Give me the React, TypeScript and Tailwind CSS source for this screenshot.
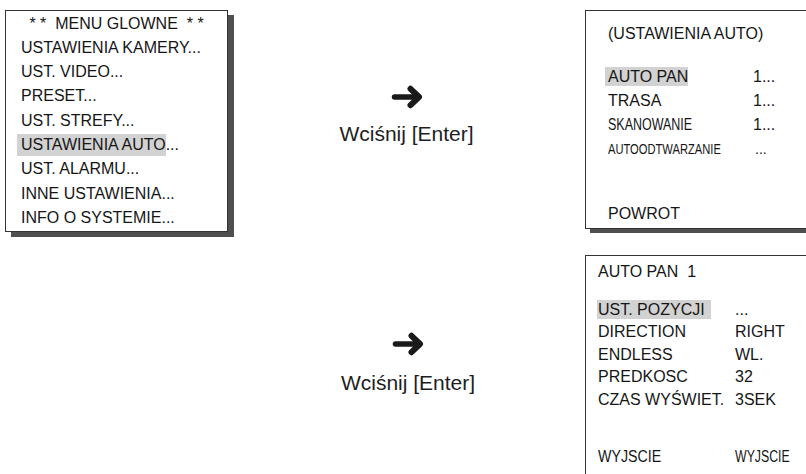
import React from "react";

const Arrow = () => (
  <svg width="32" height="24" viewBox="0 0 32 24" className="block">
    <path d="M3.5 12 H26" stroke="#1a1a1a" strokeWidth="5.5" strokeLinecap="round" fill="none" />
    <path
      d="M19.5 3.8 L28 12 L19.5 20.2"
      stroke="#1a1a1a"
      strokeWidth="6"
      strokeLinecap="round"
      strokeLinejoin="round"
      fill="none"
    />
  </svg>
);

const Press = () => (
  <div className="text-[21px] leading-[24px] text-[#1e1e1e] whitespace-nowrap">Wciśnij [Enter]</div>
);

export default function App() {
  return (
    <div className="w-[806px] h-[474px] overflow-hidden bg-white text-[#161616] font-['Liberation_Sans',Arial,sans-serif]">
      {/* Row 1 */}
      <div className="flex h-[255px] pt-[10px]">
        <div className="w-[228px] shrink-0 pl-[5px]">
          <div className="w-[223px] h-[222px] border border-[#333] bg-white shadow-[6px_5px_0_#4f4f4f] text-[16px] leading-[24.3px] pt-[0.5px] pl-[15px] whitespace-pre">
            <div className="text-center -ml-[15px]">{"* *  MENU GLOWNE  * *"}</div>
            <div>USTAWIENIA KAMERY...</div>
            <div>UST. VIDEO...</div>
            <div>PRESET...</div>
            <div>UST. STREFY...</div>
            <div>
              <span className="inline-block leading-[22px] bg-[#d2d2d2] -ml-[4px] pl-[4px]">USTAWIENIA AUTO</span>...
            </div>
            <div>UST. ALARMU...</div>
            <div>INNE USTAWIENIA...</div>
            <div>INFO O SYSTEMIE...</div>
          </div>
        </div>

        <div className="flex-1 flex flex-col items-center pt-[75px]">
          <Arrow />
          <div className="mt-[13px]">
            <Press />
          </div>
        </div>

        <div className="w-[221px] shrink-0">
          <div className="w-[240px] h-[219px] border border-[#333] bg-white shadow-[5px_4px_0_#4f4f4f] flex flex-col text-[16px] pl-[22px] pt-[11px] pb-[2px]">
            <div className="leading-[24px]">(USTAWIENIA AUTO)</div>
            <div className="mt-[18.7px] grid grid-cols-[145px_1fr] leading-[24px]">
              <div>
                <span className="inline-block leading-[19px] bg-[#d2d2d2] -ml-[3px] pl-[3px]">AUTO PAN</span>
              </div>
              <div>1...</div>
              <div>TRASA</div>
              <div>1...</div>
              <div>
                <span className="inline-block text-[16px] origin-left [transform:scaleX(0.78)] whitespace-nowrap">SKANOWANIE</span>
              </div>
              <div>1...</div>
              <div>
                <span className="inline-block text-[15.5px] origin-left [transform:scaleX(0.72)] whitespace-nowrap">AUTOODTWARZANIE</span>
              </div>
              <div className="pl-[2px] text-[14px]">...</div>
            </div>
            <div className="mt-auto leading-[24px]">POWROT</div>
          </div>
        </div>
      </div>

      {/* Row 2 */}
      <div className="flex h-[219px]">
        <div className="w-[228px] shrink-0" />
        <div className="flex-1 flex flex-col items-center pt-[77px] pl-[3px]">
          <Arrow />
          <div className="mt-[15px]">
            <Press />
          </div>
        </div>
        <div className="w-[221px] shrink-0">
          <div className="w-[240px] h-[240px] border border-[#333] bg-white text-[16px] leading-[22.5px] pl-[12px] pt-[4.5px]">
            <div className="whitespace-pre">{"AUTO PAN  1"}</div>
            <div className="mt-[15.75px] grid grid-cols-[137px_1fr]">
              <div>
                <span className="inline-block leading-[19px] bg-[#d2d2d2] -ml-[1px] pl-[1px] pr-[6px]">UST. POZYCJI</span>
              </div>
              <div>...</div>
              <div>DIRECTION</div>
              <div>RIGHT</div>
              <div>ENDLESS</div>
              <div>WL.</div>
              <div>PREDKOSC</div>
              <div>32</div>
              <div className="whitespace-nowrap">CZAS WYŚWIET.</div>
              <div>3SEK</div>
            </div>
            <div className="mt-[34.5px] grid grid-cols-[137px_1fr]">
              <div>
                <span className="inline-block text-[16px] origin-left [transform:scaleX(0.89)]">WYJSCIE</span>
              </div>
              <div>
                <span className="inline-block text-[16px] origin-left [transform:scaleX(0.77)]">WYJSCIE</span>
              </div>
            </div>
          </div>
        </div>
      </div>
    </div>
  );
}
